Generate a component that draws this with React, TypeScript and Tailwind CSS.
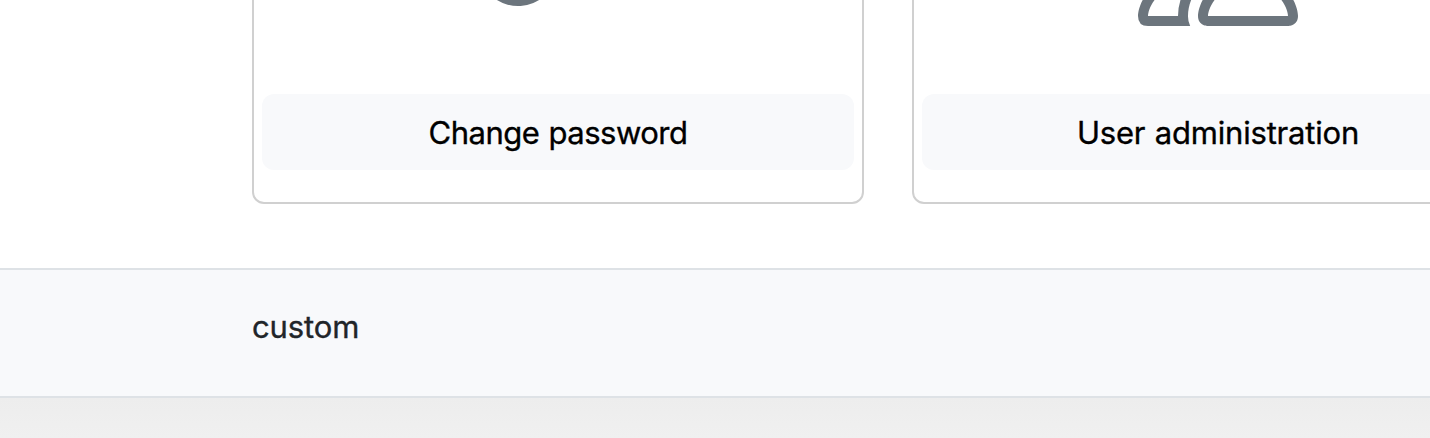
import { BsKey, BsPeople } from "react-icons/bs";
import type { IconType } from "react-icons";

type Item = { label: string; icon: IconType; spacing: string };

const items: Item[] = [
  { label: "Change password", icon: BsKey, spacing: "tracking-[-0.5px]" },
  { label: "User administration", icon: BsPeople, spacing: "tracking-[-0.2px]" },
];

function Card({ label, icon: Icon, spacing }: Item) {
  return (
    <section className="flex h-[400px] w-[612px] shrink-0 flex-col items-center justify-end rounded-xl border-2 border-[#d0d0d0] bg-white px-2 pb-8">
      <Icon size={160} className="mb-12 text-[#6c757d]" />
      <button
        className={`h-[76px] w-full rounded-xl bg-[#f8f9fb] pt-0.5 text-[31px] leading-[48px] text-black [word-spacing:1px] [-webkit-text-stroke:0.35px_currentColor] ${spacing}`}
      >
        {label}
      </button>
    </section>
  );
}

export default function App() {
  return (
    <div className="h-[438px] overflow-hidden bg-[#eeeeee] font-['Inter','Liberation_Sans',sans-serif]">
      <main className="flex h-[268px] items-end gap-12 overflow-hidden bg-white pb-16 pl-[252px]">
        {items.map((item) => (
          <Card key={item.label} {...item} />
        ))}
      </main>
      <footer className="h-[130px] border-y-2 border-[#dee2e6] bg-[#f8f9fb] pt-[33px] pl-[252px]">
        <p className="text-[31px] leading-[48px] tracking-[-0.1px] text-[#212529] [-webkit-text-stroke:0.35px_currentColor]">
          custom
        </p>
      </footer>
      <div className="h-10 bg-linear-to-b from-[#ededed] to-[#f0f0f0]" />
    </div>
  );
}
